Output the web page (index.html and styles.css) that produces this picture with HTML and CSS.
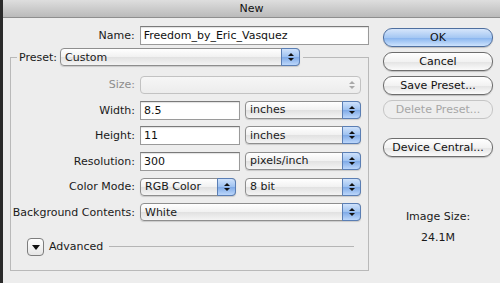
FILE: index.html
```html
<!DOCTYPE html>
<html lang="en">
<head>
    <meta charset="UTF-8">
    <title>New</title>
    <link rel="stylesheet" href="styles.css">
</head>
<body>
    <div class="window">
        <div class="titlebar">New</div>
        <div class="dialog">
            <div class="main-col">
                <div class="name-row">
                    <label class="lbl" for="docName">Name:</label>
                    <input id="docName" class="field name-field" type="text" value="Freedom_by_Eric_Vasquez">
                </div>

                <fieldset class="preset-box">
                    <legend class="preset-legend">
                        <span class="legend-label">Preset:</span>
                        <span class="popup popup-preset">Custom<span class="arrows"></span></span>
                    </legend>

                    <div class="form-grid">
                        <span class="lbl disabled">Size:</span>
                        <span class="popup popup-wide popup-disabled"><span class="arrows"></span></span>

                        <span class="lbl">Width:</span>
                        <div class="pair">
                            <input class="field num-field" type="text" value="8.5">
                            <span class="popup popup-unit">inches<span class="arrows"></span></span>
                        </div>

                        <span class="lbl">Height:</span>
                        <div class="pair">
                            <input class="field num-field" type="text" value="11">
                            <span class="popup popup-unit">inches<span class="arrows"></span></span>
                        </div>

                        <span class="lbl">Resolution:</span>
                        <div class="pair">
                            <input class="field num-field" type="text" value="300">
                            <span class="popup popup-unit">pixels/inch<span class="arrows"></span></span>
                        </div>

                        <span class="lbl">Color Mode:</span>
                        <div class="pair">
                            <span class="popup popup-mode">RGB Color<span class="arrows"></span></span>
                            <span class="popup popup-unit">8 bit<span class="arrows"></span></span>
                        </div>

                        <span class="lbl">Background Contents:</span>
                        <span class="popup popup-wide">White<span class="arrows"></span></span>
                    </div>

                    <div class="advanced">
                        <span class="disclosure"></span>
                        <span class="adv-text">Advanced</span>
                        <span class="adv-line"></span>
                    </div>
                </fieldset>
            </div>

            <div class="side-col">
                <button class="aqua-btn default">OK</button>
                <button class="aqua-btn">Cancel</button>
                <button class="aqua-btn">Save Preset...</button>
                <button class="aqua-btn" disabled>Delete Preset...</button>
                <button class="aqua-btn device-btn">Device Central...</button>
                <div class="image-size">
                    <div>Image Size:</div>
                    <div class="size-value">24.1M</div>
                </div>
            </div>
        </div>
    </div>
</body>
</html>
```

FILE: styles.css
```css
body {
    margin: 0;
    padding: 0;
    background: #2b2b2b;
    font-family: "DejaVu Sans", Arial, sans-serif;
    font-size: 11px;
    color: #1a1a1a;
}
.window {
    margin-left: 3px;
    height: 283px;
    background: #ededed;
    overflow: hidden;
}
.titlebar {
    height: 17px;
    line-height: 17px;
    text-align: center;
    font-size: 11px;
    color: #111;
    background: linear-gradient(#dedede, #bababa);
    border-bottom: 1px solid #8e8e8e;
}
.dialog {
    display: flex;
    padding-top: 8px;
}
.main-col {
    width: 366px;
    flex-shrink: 0;
}
.lbl {
    text-align: right;
    white-space: nowrap;
}
.lbl.disabled {
    color: #8c8c8c;
}
.name-row {
    display: flex;
    align-items: center;
    gap: 5px;
}
.name-row .lbl {
    width: 132px;
}
.field {
    box-sizing: border-box;
    height: 19px;
    border: 1px solid #9a9a9a;
    border-top-color: #7a7a7a;
    background: #fff;
    font: inherit;
    color: #111;
    padding: 0 3px;
    margin: 0;
    box-shadow: inset 0 1px 1px rgba(0,0,0,0.12);
}
.name-field {
    width: 230px;
}
.num-field {
    width: 100px;
}
/* Preset group */
.preset-box {
    width: 359px;
    min-width: 0;
    height: 223px;
    margin: 3px 0 0 7px;
    padding: 0;
    border: 1px solid #b9b9b9;
    box-sizing: border-box;
}
.preset-legend {
    display: flex;
    align-items: center;
    gap: 3px;
    padding: 0 3px 0 2px;
    margin-left: 6px;
}
.form-grid {
    display: grid;
    grid-template-columns: 124px auto;
    grid-auto-rows: 19px;
    column-gap: 5px;
    row-gap: 6.5px;
    align-items: center;
    margin-top: 9px;
}
.pair {
    display: flex;
    gap: 5px;
}
.popup {
    position: relative;
    box-sizing: border-box;
    display: flex;
    align-items: center;
    height: 18px;
    padding: 0 4px;
    border: 1px solid #8e8e8e;
    border-radius: 4px;
    background: linear-gradient(#ffffff, #f1f1f1 50%, #e1e1e1 51%, #f4f4f4);
    box-shadow: 0 1px 1px rgba(0,0,0,0.15);
    white-space: nowrap;
}
.popup-preset {
    width: 240px;
}
.popup-wide {
    width: 221px;
}
.popup-unit {
    width: 116px;
}
.popup-mode {
    width: 96px;
    margin-right: 4px;
}
.arrows {
    position: absolute;
    top: -1px;
    right: -1px;
    bottom: -1px;
    width: 17px;
    border: 1px solid #5a7eb4;
    border-radius: 0 4px 4px 0;
    background: linear-gradient(#cfe2fb, #9dc1f0 50%, #7ea9e6 51%, #bcd7fb);
}
.arrows::before,
.arrows::after {
    content: '';
    position: absolute;
    left: 6px;
    border-left: 3px solid transparent;
    border-right: 3px solid transparent;
}
.arrows::before {
    top: 4px;
    border-bottom: 3px solid #111;
}
.arrows::after {
    bottom: 4px;
    border-top: 3px solid #111;
}
.popup-disabled {
    border-color: #c2c2c2;
    box-shadow: none;
    background: linear-gradient(#f6f6f6, #ececec);
}
.popup-disabled .arrows {
    border-color: transparent;
    background: none;
}
.popup-disabled .arrows::before {
    border-bottom-color: #a8a8a8;
}
.popup-disabled .arrows::after {
    border-top-color: #a8a8a8;
}
/* Advanced */
.advanced {
    display: flex;
    align-items: center;
    margin: 16px 0 0 16px;
    gap: 5px;
}
.disclosure {
    position: relative;
    width: 17px;
    height: 18px;
    box-sizing: border-box;
    border: 1px solid #7d7d7d;
    border-radius: 4px;
    background: linear-gradient(#ffffff, #e6e6e6);
}
.disclosure::after {
    content: '';
    position: absolute;
    left: 4px;
    top: 6px;
    border-left: 4px solid transparent;
    border-right: 4px solid transparent;
    border-top: 5px solid #111;
}
.adv-line {
    flex: 1;
    height: 1px;
    background: #b5b5b5;
    margin: 0 14px 0 1px;
}
/* Right buttons */
.side-col {
    display: flex;
    flex-direction: column;
    width: 110px;
    margin-left: 14px;
    padding-top: 2px;
}
.aqua-btn {
    height: 19px;
    margin-bottom: 5px;
    border: 1px solid #6d6d6d;
    border-radius: 9px;
    background: linear-gradient(#ffffff, #f2f2f2 50%, #e3e3e3 51%, #fbfbfb);
    font: inherit;
    color: #111;
    padding: 0;
    box-shadow: 0 1px 1px rgba(0,0,0,0.2);
}
.aqua-btn.default {
    border-color: #4f6f9f;
    background: linear-gradient(#d6e6fb, #a6c8f3 50%, #86b3ee 51%, #cde3fd);
}
.aqua-btn:disabled {
    color: #a6a6a6;
    border-color: #c5c5c5;
    box-shadow: none;
    background: #eeeeee;
}
.device-btn {
    margin-top: 14px;
}
.image-size {
    margin-top: 44px;
    text-align: center;
    line-height: 21px;
}
```
